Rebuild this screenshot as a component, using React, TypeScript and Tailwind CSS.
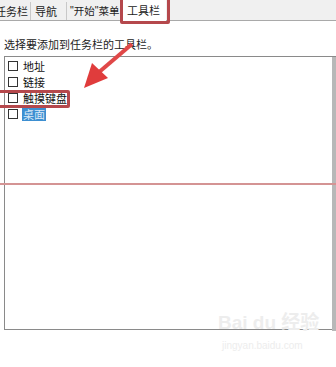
import React from "react";

const font = { fontFamily: '"Noto Sans CJK SC", "Noto Sans", sans-serif' };
const latin = { fontFamily: '"Liberation Sans", sans-serif' };

function Item({ label, selected }: { label: string; selected?: boolean }) {
  return (
    <div className="flex items-center h-[16px]">
      <div className="w-[10px] h-[10px] border border-[#333] bg-white ml-[3px] shrink-0" />
      <span
        className={
          "ml-[4px] text-[11px] leading-[13px] px-[1px] whitespace-nowrap " +
          (selected ? "bg-[#3d8fd1] text-[#dbeaf7]" : "text-[#111]")
        }
      >
        {label}
      </span>
    </div>
  );
}

export default function App() {
  return (
    <div className="relative w-[336px] h-[367px] overflow-hidden bg-white" style={font}>
      {/* Tab strip */}
      <div className="flex items-end h-[21px] bg-[#f0f0f0] border-b border-[#a9a9a9] whitespace-nowrap">
        <div className="shrink-0 ml-[-10px] h-[18px] w-[41px] pl-[5px] flex items-center border-r border-[#c8c8c8] text-[11px] text-[#222]">任务栏</div>
        <div className="shrink-0 h-[18px] w-[36px] pl-[4px] flex items-center border-r border-[#c8c8c8] text-[11px] text-[#222]">导航</div>
        <div className="shrink-0 h-[18px] w-[55px] pl-[3px] flex items-center border-r border-[#c8c8c8] text-[10.5px] text-[#222]">
          <span style={latin}>"</span>开始<span style={latin}>"</span>菜单
        </div>
        <div className="shrink-0 h-[21px] w-[44px] pl-[5px] flex items-center bg-white text-[11px] text-[#222] mb-[-1px]">工具栏</div>
      </div>

      {/* Instruction */}
      <div className="mt-[16px] ml-[4px] text-[11px] leading-[14px] text-[#222]">选择要添加到任务栏的工具栏。</div>

      {/* List box */}
      <div className="mt-[5px] ml-[4px] w-[340px] h-[274px] border border-[#8a8a8a] pt-[1px] flex flex-col">
        <Item label="地址" />
        <Item label="链接" />
        <Item label="触摸键盘" />
        <Item label="桌面" selected />
      </div>

      {/* right edge bar */}
      <div className="absolute left-[332px] top-[57px] w-[4px] h-[274px] bg-[#b8b8b8]" />

      {/* Annotations */}
      <div className="absolute left-[120px] top-[-3px] w-[50px] h-[27px] border-[3px] border-[#b5484c] rounded-[2px]" />
      <div className="absolute left-[-3px] top-[90px] w-[73px] h-[18px] border-[3px] border-[#b5484c] rounded-[2px]" />
      <div className="absolute left-0 top-[183px] w-[336px] h-[2px] bg-[#d49494]" />
      <svg className="absolute left-0 top-0" width="336" height="367">
        <line x1="132" y1="44" x2="98" y2="73" stroke="#e04848" strokeWidth="4" />
        <polygon points="84,88 92,63 108,78" fill="#e03c3c" />
      </svg>

      {/* Watermark */}
      <div className="absolute left-[218px] top-[312px] text-[#ededed] text-[19px] font-bold leading-[22px]" style={{ fontFamily: '"Liberation Sans", "Noto Sans CJK SC", sans-serif' }}>
        Bai du 经验
      </div>
      <div className="absolute left-[222px] top-[340px] text-[#ededed] text-[10px] leading-[12px]" style={latin}>
        jingyan.baidu.com
      </div>
    </div>
  );
}
